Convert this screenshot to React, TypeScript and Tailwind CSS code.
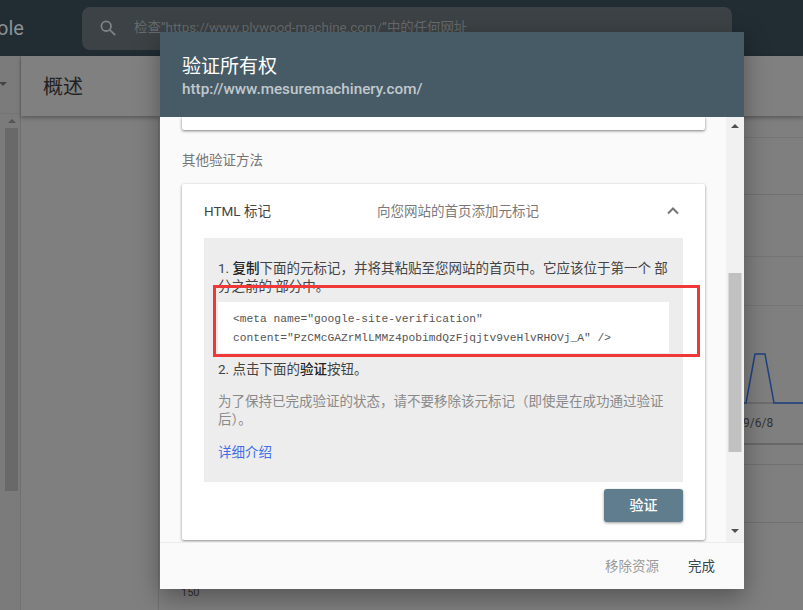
const sans = "font-['Roboto','Noto_Sans_CJK_SC',sans-serif]";

function BackgroundPage() {
  return (
    <div className="flex h-full flex-col">
      <header className="flex h-14 shrink-0 items-center bg-[#212c33] pr-[71px]">
        <span className="w-[82px] -indent-[3px] text-left text-[20px] leading-none text-[#8b9296]">ole</span>
        <div className="flex h-[43px] flex-1 items-center rounded-lg bg-[#3c4245] pl-[18px]">
          <svg width="16" height="16" viewBox="0 0 16 16" fill="none" stroke="#7d8386" strokeWidth="1.8">
            <circle cx="6.2" cy="6.2" r="4.8" />
            <path d="M9.8 9.8l5.4 5.4" />
          </svg>
          <span className="ml-[18px] text-[13.4px] text-[#666b6e]">检查“https://www.plywood-machine.com/”中的任何网址</span>
        </div>
      </header>
      <div className="flex min-h-0 flex-1">
        <aside className="w-[21px] shrink-0 border-r border-[#707070] bg-[#7b7b7b]">
          <div className="flex h-[58px] items-center border-b border-[#747474]">
            <span className="h-0 w-0 -translate-x-[1px] -translate-y-[1px] border-x-[4px] border-t-[4px] border-x-transparent border-t-[#444]" />
          </div>
          <div className="ml-[5px] mt-[5px] h-0 w-0 translate-x-[3px] border-x-[4px] border-b-[4px] border-x-transparent border-b-[#555]" />
          <div className="ml-[5px] mt-[5px] h-[363px] w-[13px] bg-[#696969]" />
        </aside>
        <main className="min-w-0 flex-1">
          <div className="flex h-[60px] items-center bg-[#808080] pl-[22px] pt-[2px] text-[20px] text-[#222] shadow-[0_2px_4px_rgba(0,0,0,0.3)]">
            概述
          </div>
          <div className="flex h-[494px]">
            <div className="w-[138px] shrink-0 border-r border-[#707070]" />
            <div className="flex min-w-0 flex-1 items-end pb-[12px] pl-[22px] text-[11px] leading-none text-[#333]">150</div>
            <div className="w-[59px] shrink-0 pt-[21px]">
              <div className="h-[57px] border-t border-[#757575]" />
              <div className="h-[62px] border-t border-[#717171]" />
              <div className="h-[49px] border-t border-[#757575]" />
              <div className="h-[48px] border-t border-[#757575]" />
              <svg width="59" height="52" viewBox="0 0 59 52" className="block" fill="none">
                <path d="M0 50H59" stroke="#5d5d5d" strokeWidth="1" />
                <path d="M0 50H2L11 1h10l9 49h29" stroke="#1f4283" strokeWidth="1.5" />
              </svg>
              <div className="mt-[9px] -ml-[1px] text-[12px] leading-[18px] text-[#333]">9/6/8</div>
              <div className="mt-[11px] h-[21px] border-t-2 border-[#686868]" />
              <div className="h-[58px] border-t border-[#717171]" />
              <div className="h-[50px] border-t border-[#717171]" />
            </div>
          </div>
        </main>
      </div>
    </div>
  );
}

function Dialog() {
  return (
    <div className="absolute left-[160px] top-[32px] flex h-[557px] w-[584px] flex-col bg-[#fafafa] shadow-[0_8px_24px_rgba(0,0,0,0.35)]">
      <div className="h-[85px] shrink-0 bg-[#475b67] pl-[22px] pt-[21px] text-white">
        <div className="text-[19px] leading-[28px]">验证所有权</div>
        <div className="text-[15.25px] font-medium leading-[17px] text-[#c1c8cc]">http://www.mesuremachinery.com/</div>
      </div>
      <div className="flex min-h-0 flex-1">
        <div className="min-w-0 flex-1 overflow-hidden pl-[22px] pr-[21px]">
          <div className="h-[13px] rounded-b-[2px] bg-white shadow-[0_1px_3px_rgba(0,0,0,0.5)]" />
          <div className="mt-[21px] pt-[1px] text-[13.5px] leading-[17px] text-[#757575]">其他验证方法</div>
          <section className="mt-[15px] h-[356px] rounded-[2px] bg-white px-[22px] shadow-[0_1px_3px_rgba(0,0,0,0.45)]">
            <div className="flex h-[54px] items-center pt-[1px]">
              <span className="w-[173px] text-[13.5px] text-[#444]">HTML 标记</span>
              <span className="flex-1 text-[13.5px] text-[#7a7a7a]">向您网站的首页添加元标记</span>
              <svg width="16" height="16" viewBox="0 0 16 16" fill="none" stroke="#757575" strokeWidth="2" className="mr-[2px] -translate-y-[1px]">
                <path d="M3 10.5l5-5 5 5" />
              </svg>
            </div>
            <div className="h-[244px] bg-[#ededed] px-[14px] pt-[21px] text-[13.5px] leading-[18px] text-[#444]">
              <p>
                1. <b className="font-medium text-[#222]">复制</b><span>下面的元标记，并将其粘贴至您网站的首页中。它应该位于第一个 部分之前的 部分中。</span>
              </p>
              <div className="mt-[7px] h-[51px] bg-white pl-[15px] pt-[8px] font-['Liberation_Mono',monospace] text-[11.25px] leading-[19px] text-[#555]">
                &lt;meta name="google-site-verification"
                <br />
                content="PzCMcGAZrMlLMMz4pobimdQzFjqjtv9veHlvRHOVj_A" /&gt;
              </div>
              <p className="mt-[7px]">
                2. 点击下面的<b className="font-medium text-[#222]">验证</b>按钮。
              </p>
              <p className="mt-[14px] text-[#8a8a8a]">为了保持已完成验证的状态，请不要移除该元标记（即使是在成功通过验证后）。</p>
              <p className="mt-[15px] text-[#3f6fe8]">详细介绍</p>
            </div>
            <div className="mt-[7px] flex justify-end">
              <button className="h-[33px] w-[79px] rounded-[3px] bg-[#5f7d8c] text-[14px] font-medium text-white shadow-[0_1px_3px_rgba(0,0,0,0.4)]">验证</button>
            </div>
          </section>
        </div>
        <div className="flex w-[18px] shrink-0 flex-col items-center bg-[#f1f1f1]">
          <span className="mt-[7px] h-0 w-0 border-x-[4px] border-b-[4px] border-x-transparent border-b-[#505050]" />
          <div className="mt-[145px] h-[179px] w-[13px] -translate-x-[0.5px] bg-[#c1c1c1]" />
          <span className="mt-[77px] h-0 w-0 border-x-[4px] border-t-[4px] border-x-transparent border-t-[#505050]" />
        </div>
      </div>
      <div className="flex h-[47px] shrink-0 items-center justify-end border-t border-[#ececec] bg-[#fafafa] pr-[29px] pt-[1px] text-[13.5px]">
        <span className="text-[#9a9a9a]">移除资源</span>
        <span className="ml-[29px] text-[#37474f]">完成</span>
      </div>
    </div>
  );
}

export default function App() {
  return (
    <div className={`relative h-[610px] w-[803px] overflow-hidden bg-[#7f7f7f] ${sans}`}>
      <BackgroundPage />
      <Dialog />
      <div className="absolute left-[213px] top-[285px] h-[72px] w-[487px] border-[3px] border-[#f03838]" />
    </div>
  );
}
